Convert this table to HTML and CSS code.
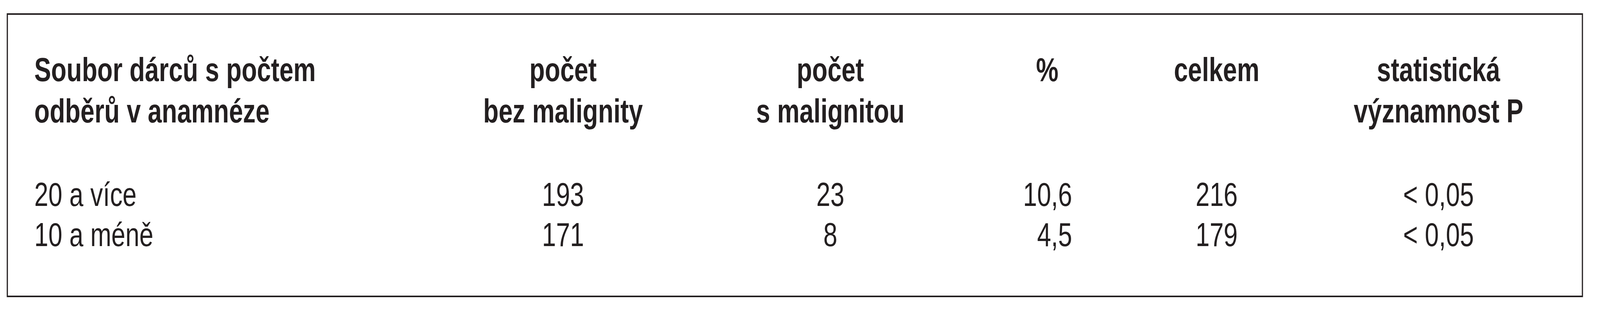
FILE: index.html
```html
<!DOCTYPE html>
<html lang="cs">
<head>
<meta charset="utf-8">
<title>Soubor dárců</title>
<link rel="stylesheet" href="styles.css">
</head>
<body>
<div class="viewport">
  <div class="page">
    <div class="frame">
      <div class="table">
        <div class="cell head left">Soubor dárců s počtem<br>odběrů v anamnéze</div>
        <div class="cell head">počet<br>bez malignity</div>
        <div class="cell head">počet<br>s malignitou</div>
        <div class="cell head">%</div>
        <div class="cell head">celkem</div>
        <div class="cell head">statistická<br>významnost P</div>

        <div class="cell left">20 a více</div>
        <div class="cell">193</div>
        <div class="cell">23</div>
        <div class="cell pct">10,6</div>
        <div class="cell">216</div>
        <div class="cell">&lt; 0,05</div>

        <div class="cell left">10 a méně</div>
        <div class="cell">171</div>
        <div class="cell">8</div>
        <div class="cell pct">4,5</div>
        <div class="cell">179</div>
        <div class="cell">&lt; 0,05</div>
      </div>
    </div>
  </div>
</div>
</body>
</html>
```

FILE: styles.css
```css
html, body {
  margin: 0;
  padding: 0;
  background: #ffffff;
  overflow: hidden;
}

body {
  font-family: "Liberation Sans", Arial, Helvetica, sans-serif;
  color: #231f20;
}

/* clips the untransformed layout box so nothing scrolls */
.viewport {
  width: 100vw;
  height: 100vh;
  overflow: hidden;
}

/* the page is designed for a 5459px wide frame */
.page {
  box-sizing: border-box;
  width: 5459px;
  height: 800px;
  padding: 34px 0 0 23px;
  transform-origin: 0 0;
}

/* the browser window is capped narrower than the frame: fit the width */
@media (max-width: 5400px) {
  .page {
    transform: scaleX(0.75032);
  }
}

.frame {
  box-sizing: border-box;
  width: 5378px;
  height: 728px;
  border: 4px solid #231f20;
  padding: 87px 61px 0 90px;
}

.table {
  display: grid;
  grid-template-columns: 1383px 842px 982px 498px 658px 856px;
  align-items: start;
  font-size: 86px;
}

.cell {
  text-align: center;
  line-height: 103px;
  white-space: nowrap;
}

.cell.left {
  text-align: left;
}

.cell.head {
  font-weight: bold;
  line-height: 106px;
  margin-bottom: 110px;
}

.cell.pct {
  text-align: right;
  padding-right: 164px;
}
```
